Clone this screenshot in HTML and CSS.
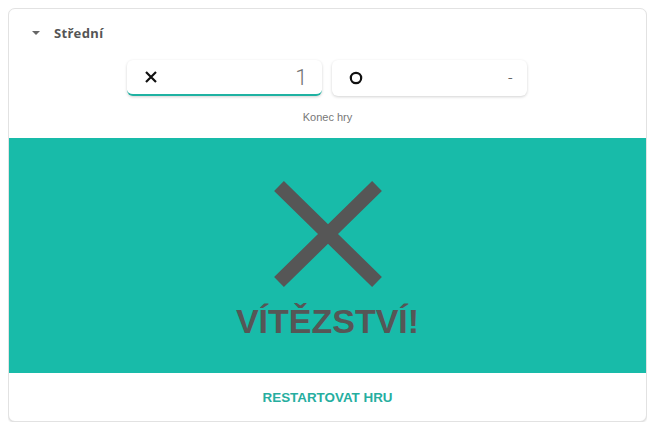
FILE: index.html
```html
<!DOCTYPE html>
<html lang="cs">
<head>
<meta charset="utf-8">
<title>Piškvorky</title>
<link rel="stylesheet" href="styles.css">
</head>
<body>
<div class="card">
  <div class="header">
    <span class="caret"></span>
    <span class="level">Střední</span>
  </div>
  <div class="tabs">
    <div class="tab active">
      <svg class="mark" width="14" height="14" viewBox="0 0 14 14"><path d="M2 2L12 12M12 2L2 12" stroke="#111" stroke-width="2.2" fill="none"/></svg>
      <span class="score">1</span>
    </div>
    <div class="tab">
      <svg class="mark" width="14" height="14" viewBox="0 0 14 14"><circle cx="7" cy="7" r="5.2" stroke="#111" stroke-width="2.2" fill="none"/></svg>
      <span class="score small">-</span>
    </div>
  </div>
  <div class="status">Konec hry</div>
  <div class="result">
    <svg class="bigx" width="108" height="106" viewBox="0 0 108 106"><path d="M5 5L103 101M103 5L5 101" stroke="#565656" stroke-width="14" fill="none"/></svg>
    <div class="win">VÍTĚZSTVÍ!</div>
  </div>
  <div class="footer">
    <button class="restart">RESTARTOVAT HRU</button>
  </div>
</div>
</body>
</html>
```
FILE: styles.css
```css
body {
  margin: 8px;
  background: #fff;
  font-family: "Liberation Sans", Arial, sans-serif;
}
.card {
  width: 637px;
  height: 412px;
  border: 1px solid #e2e2e2;
  border-radius: 7px;
  box-shadow: 0 1px 2px rgba(0,0,0,0.15);
  display: flex;
  flex-direction: column;
  overflow: hidden;
  background: #fff;
}
.header {
  display: flex;
  align-items: center;
  height: 20px;
  padding: 14px 0 0 23px;
}
.caret {
  width: 0;
  height: 0;
  border-left: 4px solid transparent;
  border-right: 4px solid transparent;
  border-top: 4px solid #666;
  margin-right: 14px;
}
.level {
  font-family: "Noto Sans", sans-serif;
  font-weight: 700;
  font-size: 13px;
  color: #555;
  letter-spacing: 0.4px;
}
.tabs {
  display: flex;
  justify-content: center;
  gap: 10px;
  margin-top: 17px;
  padding-right: 2px;
}
.tab {
  width: 195px;
  height: 36px;
  box-sizing: border-box;
  border-radius: 6px;
  box-shadow: 0 1px 3px rgba(0,0,0,0.18);
  display: flex;
  align-items: center;
  justify-content: space-between;
  padding: 0 14px 0 17px;
  background: #fff;
}
.tab.active {
  border-bottom: 2px solid #1fb2a2;
}
.mark { display: block; }
.score {
  font-family: Roboto, sans-serif;
  font-weight: 300;
  font-size: 22px;
  color: #737373;
}
.score.small {
  font-size: 16px;
  color: #555;
}
.status {
  text-align: center;
  font-size: 11px;
  color: #777;
  margin-top: 14px;
  height: 14px;
  line-height: 14px;
}
.result {
  margin-top: 14px;
  height: 235px;
  background: #18bba9;
  display: flex;
  flex-direction: column;
  align-items: center;
  padding-top: 43px;
  box-sizing: border-box;
}
.bigx { display: block; margin-left: 1px; }
.win {
  margin-top: 14px;
  font-weight: 700;
  font-size: 34px;
  line-height: 40px;
  color: #565656;
}
.footer {
  flex: 1;
  display: flex;
  align-items: center;
  justify-content: center;
}
.restart {
  border: none;
  background: none;
  font-family: "Liberation Sans", Arial, sans-serif;
  font-weight: 700;
  font-size: 13.4px;
  color: #26ae9f;
  padding: 4px 8px;
}
```
